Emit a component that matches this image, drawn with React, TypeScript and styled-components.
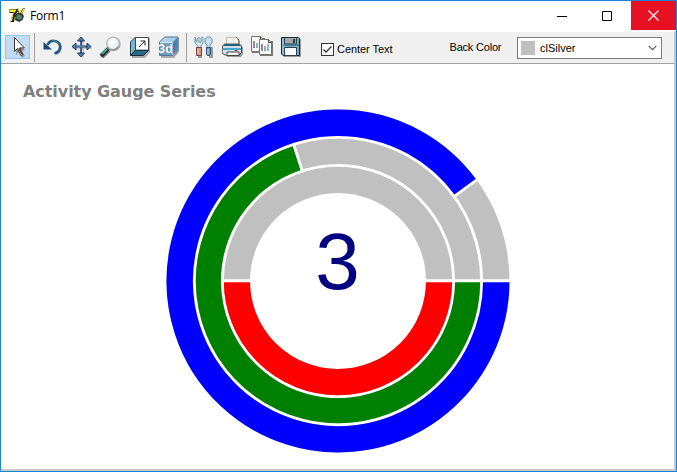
import React from "react";
import styled, { createGlobalStyle } from "styled-components";

const GlobalStyle = createGlobalStyle`
  * { box-sizing: border-box; }
  body { margin: 0; background: #fff; overflow: hidden; }
`;

const Window = styled.main`
  width: 677px;
  height: 472px;
  display: flex;
  flex-direction: column;
  border: 1px solid #1883d7;
  background: #fff;
  color: #000;
  font: 11px "Liberation Sans", Arial, sans-serif;
  white-space: nowrap;
`;

const TitleBar = styled.header`
  height: 30px;
  flex: none;
  display: flex;
  align-items: stretch;
`;

const AppIcon = styled.svg`
  width: 16px;
  height: 16px;
  margin: 6px 0 0 8px;
`;

const Caption = styled.h1`
  flex: 1;
  margin: 0 0 0 5px;
  font: 400 12px/29px "Open Sans", sans-serif;
  letter-spacing: -0.25px;
`;

const CaptionButton = styled.button<{ $close?: boolean }>`
  width: 45px;
  height: 29px;
  padding: 0;
  border: 0;
  display: grid;
  place-items: center;
  background: ${(p) => (p.$close ? "#e81123" : "#fff")};
`;

const WindowButtons = styled.div`
  display: flex;
`;

const WindowGlyph = styled.svg`
  width: 10px;
  height: 10px;
  margin-right: 3px;
`;

const Client = styled.div`
  flex: 1;
  display: flex;
  flex-direction: column;
  border: solid #c8c8c8;
  border-width: 0 2px 2px 0;
`;

const Toolbar = styled.nav`
  height: 33px;
  flex: none;
  display: flex;
  padding-left: 4px;
  border-top: 1px solid #fff;
  border-bottom: 1px solid #a0a0a0;
  background: #f0f0f0;
`;

const ToolButton = styled.button<{ $active?: boolean; $width: number }>`
  width: ${(p) => p.$width}px;
  height: 24px;
  margin-top: 3px;
  padding: 0;
  border: ${(p) => (p.$active ? "1px solid #90c8f6" : "0")};
  background: ${(p) => (p.$active ? "#c0dcf3" : "transparent")};
  display: grid;
  place-items: center;
`;

const Separator = styled.span`
  width: 1px;
  height: 29px;
  margin: 1px 3px 0 4px;
  background: #a0a0a0;

  & ~ & {
    margin: 1px 2px 0 3px;
  }
`;

const CheckLabel = styled.label`
  display: flex;
  align-items: center;
  height: 14px;
  margin: 10px 0 0 16px;
  gap: 3px;
  letter-spacing: -0.05px;
`;

const CheckBox = styled.span`
  width: 13px;
  height: 13px;
  border: 1px solid #333;
  background: #fff;
  display: grid;
  place-items: center;
`;

const FieldLabel = styled.span`
  margin: 9px 0 0 57px;
  line-height: 13px;
  letter-spacing: -0.2px;
`;

const ColorSelect = styled.div`
  width: 145px;
  height: 22px;
  margin: 5px 12px 0 auto;
  padding: 0 4px 0 3px;
  display: flex;
  align-items: center;
  gap: 5px;
  border: 1px solid #7a7a7a;
  background: #fff;
`;

const Swatch = styled.span`
  width: 14px;
  height: 14px;
  background: #c0c0c0;
`;

const SelectValue = styled.span`
  flex: 1;
`;

const ChartPanel = styled.section`
  flex: 1;
  display: flex;
  flex-direction: column;
  align-items: center;
`;

const ChartTitle = styled.h2`
  align-self: flex-start;
  height: 20px;
  margin: 17px 0 0 22px;
  color: #808080;
  font: 700 16px/22px "DejaVu Sans", Verdana, sans-serif;
  letter-spacing: -0.06px;
`;

const Gauge = styled.svg`
  width: 344px;
  height: 344px;
  margin: 8px 0 0 1px;
  flex: none;
`;

const GaugeValue = styled.text`
  font: 80px "Liberation Sans", Arial, sans-serif;
  fill: #000080;
`;

const PixelIcon = ({ children }: { children: React.ReactNode }) => (
  <svg width="22" height="22" viewBox="0 0 22 22">{children}</svg>
);

const DelphiIcon = () => (
  <AppIcon viewBox="0 0 16 16">
    <path d="M.5 2h8.2v2.5L6 8.5 5 15H1.5l1-4 2-5H.5Z" fill="#1c1800" />
    <path d="M.8 2.6h6.8L4 8 3.2 14H1.8l1.2-5L5 5H.8Z" fill="#fff32b" />
    <path d="M6 8 9 5.5l4 .5 2 3-1.5 4-3.5 2-4-2Z" fill="#253f38" />
    <circle cx="10.2" cy="10" r="2.8" fill="#4f8065" />
    <path d="m9 1 2 5 3-5h2l-3 6-2 1-3-5Z" fill="#332d00" />
    <path d="m9.5 2 1.5 4m4-4.5L12.5 6.5" stroke="#ffe92b" strokeWidth="1.4" />
    <path d="M5 10h2v2H5z" fill="#696a40" />
  </AppIcon>
);

const PointerIcon = () => (
  <PixelIcon>
    <path d="m9 4 9 10-3 1 3 5-3 2-3-6-3 3Z" fill="#64727d" opacity=".6" />
    <path d="M7.5 1.5v14l3-3 3.4 7 2.1-1-3.2-6.6h4.5Z" fill="#fff" stroke="#49352e" />
    <path d="m11.2 12.5 3 6 1.5-.7-3-6Z" fill="#70432e" />
  </PixelIcon>
);

const RotateIcon = () => (
  <PixelIcon>
    <path d="M6.5 9C9 2.7 18 4.2 19 10.3c.5 4.2-2 7.2-5.8 8" fill="none" stroke="#b0b0b0" strokeWidth="2" />
    <path d="M5.5 9C8 2.8 16.8 4 18 9.7c.7 4.1-2 7.2-5.5 7.5" fill="none" stroke="#1e5583" strokeWidth="2.5" />
    <path d="M1.5 6v7.5H10Z" fill="#174877" />
    <path d="M10 4.7c3-.2 6 1.3 7 4" fill="none" stroke="#5388aa" strokeWidth="1" />
  </PixelIcon>
);

const MoveIcon = () => (
  <PixelIcon>
    <path d="M12 2v19M2 12h19" stroke="#a8a8a8" />
    <path d="M10 2v17M2 10.5h17" stroke="#213e73" strokeWidth="2" />
    <path d="m6.5 5 3.5-4 3.5 4Zm0 12 3.5 4 3.5-4ZM5 7l-4 3.5L5 14Zm11 0 4 3.5L16 14Z" fill="#537fab" stroke="#213e73" />
    <path d="M9.8 6v10M5 10.3h10" stroke="#7798bb" strokeWidth=".7" />
  </PixelIcon>
);

const ZoomIcon = () => (
  <PixelIcon>
    <path d="m9 14-7 7" stroke="#818181" strokeWidth="4" />
    <path d="m8 13-7 7" stroke="#202d30" strokeWidth="4" />
    <path d="m7 13-5 5" stroke="#43a795" strokeWidth="2" />
    <circle cx="13.7" cy="8" r="7" fill="#a5a19e" />
    <circle cx="13" cy="7.3" r="6.2" fill="#e6f6fd" stroke="#b4b6b6" strokeWidth="1.2" />
    <path d="m9 7 3-4h3l2 2-7 6Z" fill="#fff" />
    <path d="m7 11 3 3h4l4-3" fill="none" stroke="#777" />
  </PixelIcon>
);

const DepthIcon = ({ threeD = false }: { threeD?: boolean }) => (
  <PixelIcon>
    <path d="m3 8 5-6h13v14l-5 6H3Z" fill="#aaa" />
    {threeD ? (
      <>
        <path d="m1.5 6 5-5H20v13l-5 5.5H1.5Z" fill="#a8cceb" stroke="#55758e" />
        <path d="M2 6.5h12V19H2Z" fill="#6b9dc6" />
        <path d="m14.5 6.5 5-5v12.3l-5 5Z" fill="#4b81ab" />
        <path d="M7 2v5M14.5 6.5V19" stroke="#bcdaf0" />
        <path d="M2 6.5h12" stroke="#dbeaf7" />
        <text x=".5" y="17" fill="#245985" fontFamily="Liberation Sans, sans-serif" fontWeight="700" fontSize="13">3d</text>
        <text x="0" y="16.5" fill="#fff" fontFamily="Liberation Sans, sans-serif" fontWeight="700" fontSize="13">3d</text>
      </>
    ) : (
      <>
        <path d="m1.5 6 5-5v13l-5 5.5Z" fill="#78b4cb" stroke="#24404d" />
        <path d="M6.5 1.5h13v12.8h-13Z" fill="#fff" stroke="#444" />
        <path d="m1.5 19.5 5-5.2h13l-5 5.2Z" fill="#286b8a" stroke="#182e3b" />
        <path d="m10 11 6-6m-4.5 0H16v4.5" fill="none" stroke="#202020" />
      </>
    )}
  </PixelIcon>
);

const ToolsIcon = () => (
  <PixelIcon>
    <path d="M5 11v11h4V11m7 0v11h4V11" fill="#999" />
    <path d="M2 1v6l3 3v2h3v-2l2-3V1L8 2v4H6V1L4 3v3L3 5Z" fill="#d2e8f4" stroke="#5685a4" strokeWidth=".8" />
    <path d="M3.5 11.5h5v8h-5z" fill="#d89884" stroke="#71433a" />
    <path d="M14 1h3l2 2v4l-2 2v3h-3V9l-2-2V3Z" fill="#c5def1" stroke="#5280a8" strokeWidth=".8" />
    <path d="M13.5 11.5h4v7l-1 1h-2l-1-1Z" fill="#5f98c2" stroke="#26587f" />
    <path d="M5 13v5m10-5v5" stroke="#f4cfc0" />
  </PixelIcon>
);

const PrintIcon = () => (
  <PixelIcon>
    <path d="M3 11h18v7l-2 3H5Z" fill="#999" />
    <path d="M4.5 1.5h10l2 2v6h-12Z" fill="#fff" stroke="#c5b69c" />
    <path d="m14 1 3 3v5" fill="none" stroke="#69533a" />
    <path d="M6 4h7M6 6h8" stroke="#dedede" />
    <path d="m.5 10 2-2h15l2 2v7l-3 2H3l-3-2Z" fill="#d5dfe7" stroke="#46515a" />
    <path d="M3 8h14l2 2H1Z" fill="#24627c" />
    <path d="M1 12h18v2H1Z" fill="#45a7c8" />
    <path d="M13 14h2v1h-2Z" fill="#f00" />
    <path d="M5 16h12v3.5H5Z" fill="#fff" stroke="#444" />
  </PixelIcon>
);

const Sheet = ({ x, y }: { x: number; y: number }) => (
  <g transform={`translate(${x} ${y})`}>
    <path d="M1 2h13v15H1Z" fill="#777" />
    <path d="M.5.5h9l3 3v12H.5Z" fill="#fff" stroke="#77736a" />
    <path d="M9.5.5v3h3" fill="none" stroke="#404040" />
    <path d="M3 5v7" stroke="#735891" strokeWidth="1.5" />
    <path d="M6 7v5" stroke="#52a3a7" strokeWidth="1.5" />
    <path d="M9 5v7" stroke="#6c98aa" strokeWidth="1.4" />
  </g>
);
const CopyIcon = () => <PixelIcon><Sheet x={0} y={0} /><Sheet x={8} y={3} /></PixelIcon>;

const SaveIcon = () => (
  <PixelIcon>
    <path d="M3 3h18v18H4l-1-1Z" fill="#999" />
    <path d="M1.5 1.5h17l1 1v17H3l-1.5-1.5Z" fill="#78a9bd" stroke="#172834" />
    <path d="M5 2h11v6H5Z" fill="#a8a8a8" />
    <path d="M4.5 2v6h12V2" fill="none" stroke="#2b4652" />
    <path d="M13 3h2v4h-2Z" fill="#223c53" />
    <path d="M4.5 11.5h12v8h-12Z" fill="#f8fcff" stroke="#294250" />
    <path d="M2 9h17" stroke="#2e5c70" />
    <path d="M3 3v15" stroke="#b2d2df" />
  </PixelIcon>
);

const CENTER_X = 172;
const CENTER_Y = 172;
const rings = [
  { outer: 171.5, inner: 145.1, fraction: 0.9, color: "#0000ff" },
  { outer: 142.2, inner: 117.1, fraction: 0.7, color: "#008000" },
  { outer: 114.2, inner: 88, fraction: 0.5, color: "#ff0000" },
];

const Ring = ({ outer, inner, fraction, color }: (typeof rings)[number]) => {
  const radius = (outer + inner) / 2;
  const width = outer - inner;
  const angle = fraction * Math.PI * 2;
  const dx = Math.cos(angle);
  const dy = Math.sin(angle);
  const x = CENTER_X + dx * radius;
  const y = CENTER_Y + dy * radius;
  return (
    <g fill="none">
      <circle cx={CENTER_X} cy={CENTER_Y} r={radius} stroke="#c0c0c0" strokeWidth={width} />
      <path d={`M${CENTER_X + radius} ${CENTER_Y}A${radius} ${radius} 0 ${fraction > 0.5 ? 1 : 0} 1 ${x} ${y}`} stroke={color} strokeWidth={width} />
      <path d={`M${CENTER_X + inner - 1} ${CENTER_Y - 0.2}H${CENTER_X + outer + 1}M${CENTER_X + dx * (inner - 1)} ${CENTER_Y - 0.2 + dy * (inner - 1)}L${CENTER_X + dx * (outer + 1)} ${CENTER_Y - 0.2 + dy * (outer + 1)}`} stroke="#fff" strokeWidth="3" />
    </g>
  );
};

export default function App() {
  return (
    <>
      <GlobalStyle />
      <Window>
        <TitleBar>
          <DelphiIcon />
          <Caption>Form1</Caption>
          <WindowButtons>
            <CaptionButton aria-label="Minimize"><WindowGlyph><path d="M0 5.5h10" stroke="#000" /></WindowGlyph></CaptionButton>
            <CaptionButton aria-label="Maximize"><WindowGlyph><path d="M.5.5h9v9h-9Z" fill="none" stroke="#000" /></WindowGlyph></CaptionButton>
            <CaptionButton $close aria-label="Close"><svg width="11" height="11"><path d="m.5.5 10 10m0-10-10 10" stroke="#fff" strokeWidth="1.1" /></svg></CaptionButton>
          </WindowButtons>
        </TitleBar>
        <Client>
          <Toolbar>
            <ToolButton $active $width={25} aria-label="Select"><PointerIcon /></ToolButton>
            <Separator />
            <ToolButton $width={29} aria-label="Rotate"><RotateIcon /></ToolButton>
            <ToolButton $width={29} aria-label="Move"><MoveIcon /></ToolButton>
            <ToolButton $width={29} aria-label="Zoom"><ZoomIcon /></ToolButton>
            <ToolButton $width={29} aria-label="Depth"><DepthIcon /></ToolButton>
            <ToolButton $width={29} aria-label="3D"><DepthIcon threeD /></ToolButton>
            <Separator />
            <ToolButton $width={29} aria-label="Edit"><ToolsIcon /></ToolButton>
            <ToolButton $width={29} aria-label="Print"><PrintIcon /></ToolButton>
            <ToolButton $width={29} aria-label="Copy"><CopyIcon /></ToolButton>
            <ToolButton $width={29} aria-label="Save"><SaveIcon /></ToolButton>
            <CheckLabel>
              <CheckBox><svg width="11" height="11"><path d="m1.5 5.5 2.5 2.5 5.5-5.5" fill="none" stroke="#333" strokeWidth="1.3" /></svg></CheckBox>
              Center Text
            </CheckLabel>
            <FieldLabel>Back Color</FieldLabel>
            <ColorSelect>
              <Swatch /><SelectValue>clSilver</SelectValue>
              <svg width="9" height="6"><path d="m.7.8 3.8 3.8L8.3.8" fill="none" stroke="#555" strokeWidth="1.2" /></svg>
            </ColorSelect>
          </Toolbar>
          <ChartPanel>
            <ChartTitle>Activity Gauge Series</ChartTitle>
            <Gauge viewBox="0 0 344 344">
              {rings.map((ring) => <Ring key={ring.color} {...ring} />)}
              <GaugeValue x="171.5" y="180" textAnchor="middle">3</GaugeValue>
            </Gauge>
          </ChartPanel>
        </Client>
      </Window>
    </>
  );
}
